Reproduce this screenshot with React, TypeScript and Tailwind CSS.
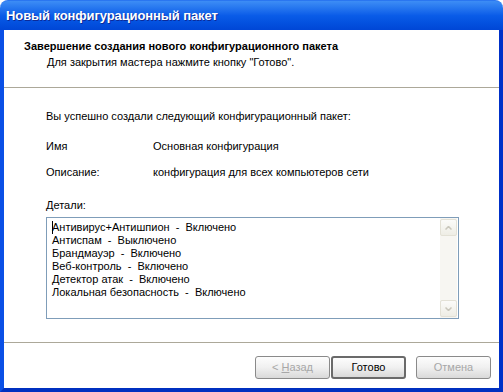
import React from "react";

const details = [
  "Антивирус+Антишпион  -  Включено",
  "Антиспам  -  Выключено",
  "Брандмауэр  -  Включено",
  "Веб-контроль  -  Включено",
  "Детектор атак  -  Включено",
  "Локальная безопасность  -  Включено",
];

function XpButton({ label, disabled, isDefault }: { label: React.ReactNode; disabled?: boolean; isDefault?: boolean }) {
  return (
    <button
      type="button"
      disabled={disabled}
      className={`w-[75px] h-[23px] rounded-[3px] text-[11px] leading-none flex items-center justify-center bg-gradient-to-b from-[#fdfdfd] via-[#f0f0f0] to-[#d9d9d9] ${
        isDefault
          ? "border-2 border-[#6a6a6a] text-black"
          : "border border-[#8a8a8a] text-[#a7a7a7]"
      }`}
    >
      <span className="whitespace-pre">{label}</span>
    </button>
  );
}

export default function App() {
  return (
    <div className="w-[503px] h-[392px] bg-white flex flex-col font-['Liberation_Sans',Arial,sans-serif] text-black">
      {/* Title bar */}
      <div className="h-[30px] shrink-0 rounded-t-[8px] bg-gradient-to-b from-[#3d8df5] via-[#0a5ce8] to-[#0046d6] border-t border-[#2a76f0] flex items-center pl-[6px]">
        <span className="text-white font-bold text-[13px] tracking-[-0.1px] [text-shadow:1px_1px_0_#0c2a98]">
          Новый конфигурационный пакет
        </span>
      </div>

      {/* Window frame */}
      <div className="flex-1 flex flex-col border-l-4 border-r-4 border-b-4 border-l-[#0a50e6] border-r-[#0030c8] border-b-[#0030c0]">
        {/* Header */}
        <div className="h-[57px] shrink-0 pt-[10px] pl-[20px] text-[11px] leading-[13px]">
          <div className="font-bold">Завершение создания нового конфигурационного пакета</div>
          <div className="mt-[3px] pl-[23px]">Для закрытия мастера нажмите кнопку "Готово".</div>
        </div>
        <div className="h-px bg-[#aca899]" />

        {/* Body */}
        <div className="flex-1 pl-[42px] pt-[22px] text-[11px] leading-[13px]">
          <div>Вы успешно создали следующий конфигурационный пакет:</div>
          <div className="flex mt-[17px]">
            <span className="w-[107px]">Имя</span>
            <span>Основная конфигурация</span>
          </div>
          <div className="flex mt-[13px]">
            <span className="w-[107px]">Описание:</span>
            <span>конфигурация для всех компьютеров сети</span>
          </div>
          <div className="mt-[20px]">
            <span className="underline">Д</span>етали:
          </div>
          <div className="mt-[5px] w-[413px] h-[102px] border border-[#7f9db9] flex">
            <div className="flex-1 pl-[5px] pt-[3px] relative">
              <span className="absolute left-[5px] top-[3px] w-px h-[13px] bg-black" />
              {details.map((d) => (
                <div key={d} className="whitespace-pre">{d}</div>
              ))}
            </div>
            {/* Scrollbar */}
            <div className="w-[17px] bg-[#f7f6f2] flex flex-col justify-between py-px mr-px">
              <div className="h-[17px] rounded-[2px] border border-[#e3e1d6] bg-gradient-to-b from-[#fbfbf9] to-[#eeede5] flex items-center justify-center">
                <svg width="7" height="4" viewBox="0 0 7 4">
                  <path d="M0.5 3.5 L3.5 0.5 L6.5 3.5" fill="none" stroke="#c9c7bc" strokeWidth="1.5" />
                </svg>
              </div>
              <div className="h-[17px] rounded-[2px] border border-[#e3e1d6] bg-gradient-to-b from-[#fbfbf9] to-[#eeede5] flex items-center justify-center">
                <svg width="7" height="4" viewBox="0 0 7 4">
                  <path d="M0.5 0.5 L3.5 3.5 L6.5 0.5" fill="none" stroke="#c9c7bc" strokeWidth="1.5" />
                </svg>
              </div>
            </div>
          </div>
        </div>

        <div className="h-px bg-[#aca899]" />

        {/* Footer */}
        <div className="h-[45px] shrink-0 flex items-start justify-end pr-[8px] pt-[13px]">
          <XpButton label={<>{"< "}<span className="underline">Н</span>азад</>} disabled />
          <div className="w-px" />
          <XpButton label="Готово" isDefault />
          <div className="w-[10px]" />
          <XpButton label="Отмена" disabled />
        </div>
      </div>
    </div>
  );
}
